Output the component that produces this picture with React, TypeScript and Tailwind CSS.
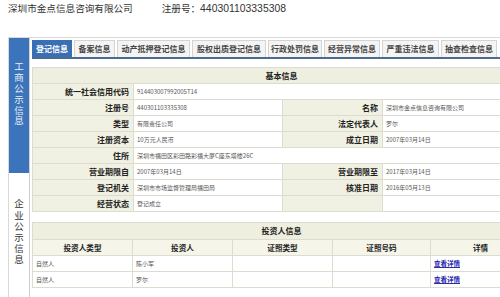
const cjk = { fontFamily: '"Noto Sans CJK SC", "Noto Sans", sans-serif' };

function Lbl({ children }: { children?: React.ReactNode }) {
  return (
    <td className="bg-[#f1f1e3] border border-[#dcdcd0] text-right pr-[4px] font-bold text-[8px] text-[#222] leading-none whitespace-nowrap">
      {children}
    </td>
  );
}
function Val({ children, span }: { children?: React.ReactNode; span?: number }) {
  return (
    <td colSpan={span} className="bg-white border border-[#dcdcd0] pl-[3px] text-[6px] text-[#555] leading-none whitespace-nowrap">
      {children}
    </td>
  );
}

const tabs = [
  ["登记信息", "w-[40px]"],
  ["备案信息", "w-[41px]"],
  ["动产抵押登记信息", "w-[73px]"],
  ["股权出质登记信息", "w-[74px]"],
  ["行政处罚信息", "w-[54px]"],
  ["经营异常信息", "w-[56px]"],
  ["严重违法信息", "w-[57px]"],
  ["抽查检查信息", "w-[56px]"],
];

export default function App() {
  return (
    <div className="w-[500px] h-[297px] overflow-hidden bg-white" style={cjk}>
      <div className="h-[37px] flex items-start pl-[8px] pt-[2px] text-[#333] leading-[12px]">
        <span className="text-[9.6px]">深圳市金点信息咨询有限公司</span>
        <span className="ml-[29px] text-[9.6px]">
          注册号：<span className="text-[10.4px]" style={{ fontFamily: '"Liberation Sans", sans-serif' }}>440301103335308</span>
        </span>
      </div>
      <div className="ml-[8px] w-[560px] border-t border-l border-[#d9d9d9] flex">
        <div className="w-[21px] shrink-0 border-r border-[#cfcfcf] flex flex-col">
          <div className="h-[135px] bg-[#3b74ba] pt-[24px] flex justify-center">
            <span className="[writing-mode:vertical-rl] text-[9.5px] leading-[12px] tracking-[1.3px] text-[#e8eff8]">
              工商公示信息
            </span>
          </div>
          <div className="h-[140px] pt-[26px] flex justify-center">
            <span className="[writing-mode:vertical-rl] text-[9.5px] leading-[12px] tracking-[1.7px] text-[#333]">
              企业公示信息
            </span>
          </div>
        </div>
        <div className="pl-[2px] pt-[2px] w-[520px]">
          <div className="flex gap-[2px] items-end">
            {tabs.map(([t, w], i) => (
              <div
                key={t}
                className={`${w} h-[17px] shrink-0 flex items-center justify-center text-[8px] font-bold border border-b-0 ${
                  i === 0 ? "bg-[#3b6fb3] border-[#3b6fb3] text-white" : "bg-[#f4f4f4] border-[#d4d4d4] text-[#444]"
                }`}
              >
                {t}
              </div>
            ))}
          </div>
          <div className="h-[2px] w-[498px] bg-[#4d6b8e]" />
          <table className="mt-[8px] w-[498px] table-fixed border-collapse">
            <colgroup>
              <col className="w-[101px]" />
              <col className="w-[149px]" />
              <col className="w-[100px]" />
              <col className="w-[148px]" />
            </colgroup>
            <tbody>
              <tr className="h-[16px]">
                <td colSpan={4} className="bg-[#efefdf] border border-[#dcdcd0] text-center font-bold text-[8px] text-[#222] leading-none">
                  基本信息
                </td>
              </tr>
              <tr className="h-[16px]">
                <Lbl>统一社会信用代码</Lbl>
                <Val span={3}>914403007992005T14</Val>
              </tr>
              <tr className="h-[16px]">
                <Lbl>注册号</Lbl>
                <Val>440301103335308</Val>
                <Lbl>名称</Lbl>
                <Val>深圳市金点信息咨询有限公司</Val>
              </tr>
              <tr className="h-[16px]">
                <Lbl>类型</Lbl>
                <Val>有限责任公司</Val>
                <Lbl>法定代表人</Lbl>
                <Val>罗尔</Val>
              </tr>
              <tr className="h-[16px]">
                <Lbl>注册资本</Lbl>
                <Val>10万元人民币</Val>
                <Lbl>成立日期</Lbl>
                <Val>2007年03月14日</Val>
              </tr>
              <tr className="h-[16px]">
                <Lbl>住所</Lbl>
                <Val span={3}>深圳市福田区彩田路彩福大厦C座东塔楼26C</Val>
              </tr>
              <tr className="h-[16px]">
                <Lbl>营业期限自</Lbl>
                <Val>2007年03月14日</Val>
                <Lbl>营业期限至</Lbl>
                <Val>2017年03月14日</Val>
              </tr>
              <tr className="h-[16px]">
                <Lbl>登记机关</Lbl>
                <Val>深圳市市场监督管理局福田局</Val>
                <Lbl>核准日期</Lbl>
                <Val>2016年05月13日</Val>
              </tr>
              <tr className="h-[16px]">
                <Lbl>经营状态</Lbl>
                <Val>登记成立</Val>
                <Lbl></Lbl>
                <Val></Val>
              </tr>
            </tbody>
          </table>
          <table className="mt-[10px] w-[498px] table-fixed border-collapse">
            <colgroup>
              <col className="w-[100px]" />
              <col className="w-[100px]" />
              <col className="w-[100px]" />
              <col className="w-[98px]" />
              <col className="w-[100px]" />
            </colgroup>
            <tbody>
              <tr className="h-[17px]">
                <td colSpan={5} className="bg-[#efefdf] border border-[#dcdcd0] text-center font-bold text-[8px] text-[#222] leading-none">
                  投资人信息
                </td>
              </tr>
              <tr className="h-[16px]">
                {["投资人类型", "投资人", "证照类型", "证照号码", "详情"].map((h) => (
                  <td key={h} className="bg-[#f5f5e9] border border-[#dcdcd0] text-center font-bold text-[7.6px] text-[#222] leading-none">
                    {h}
                  </td>
                ))}
              </tr>
              {[
                ["自然人", "陈小军"],
                ["自然人", "罗尔"],
              ].map(([a, b], i) => (
                <tr key={i} className="h-[16px]">
                  <Val>{a}</Val>
                  <Val>{b}</Val>
                  <Val></Val>
                  <Val></Val>
                  <td className="bg-white border border-[#dcdcd0] pl-[3px] text-[6.5px] leading-none">
                    <a className="text-[#2b2bb0] underline font-bold">查看详情</a>
                  </td>
                </tr>
              ))}
            </tbody>
          </table>
        </div>
      </div>
    </div>
  );
}
